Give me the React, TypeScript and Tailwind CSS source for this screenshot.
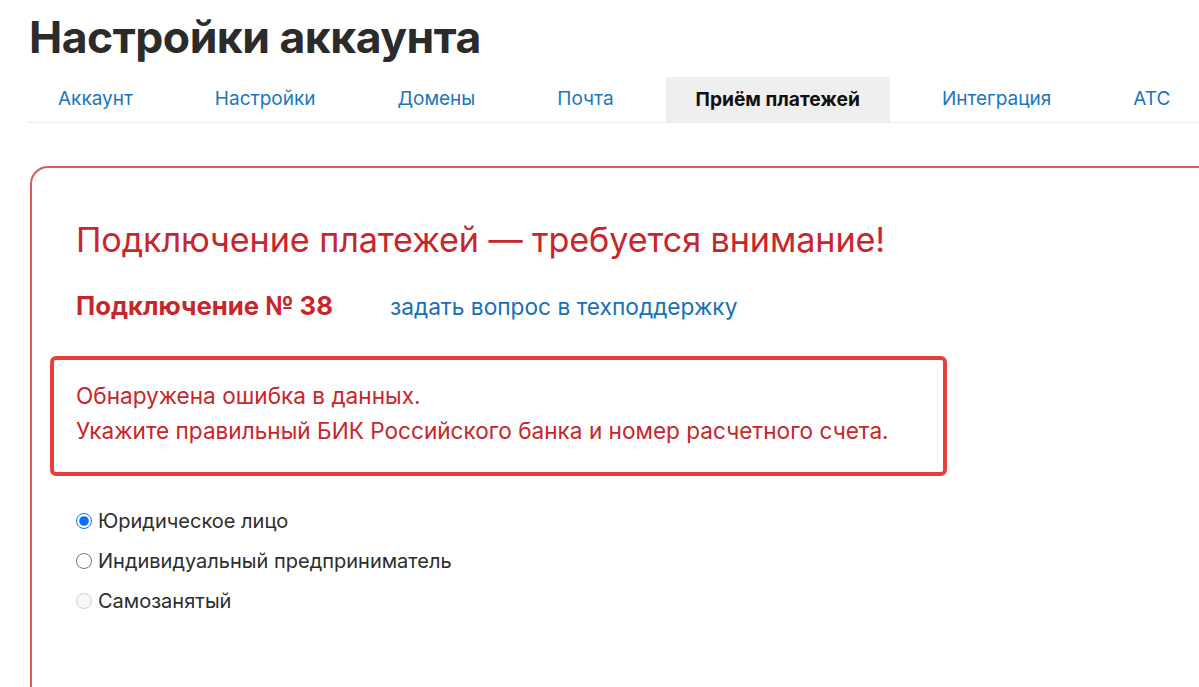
const tabs = ['Аккаунт', 'Настройки', 'Домены', 'Почта', 'Приём платежей', 'Интеграция', 'АТС'];

export default function App() {
  return (
    <div
      className="w-[1199px] h-[687px] overflow-hidden bg-white pl-[28px]"
      style={{ fontFamily: 'Inter, "Noto Sans", sans-serif' }}
    >
      <h1 className="ml-[1px] pt-[12px] text-[44.5px] font-bold leading-[50px] tracking-[-0.5px] text-[#2b2b2b]">
        Настройки аккаунта
      </h1>

      {/* tabs */}
      <nav className="mt-[15px] flex w-[1250px] gap-[22px] border-b border-[#ececec]">
        {tabs.map((t) => {
          const active = t === 'Приём платежей';
          return (
            <a
              key={t}
              className={
                active
                  ? 'flex h-[45px] shrink-0 items-center whitespace-nowrap bg-[#efefef] px-[30px] text-[19.2px] font-bold text-[#111]'
                  : 'flex h-[45px] shrink-0 items-center whitespace-nowrap px-[30px] text-[19px] text-[#1a76bd]'
              }
            >
              {t}
            </a>
          );
        })}
      </nav>

      {/* payment card */}
      <div className="ml-[2px] mt-[43px] h-[600px] w-[1220px] rounded-[18px] border-2 border-[#e15a5a] pl-[44px] pt-[52px]">
        <h2 className="text-[34.2px] leading-[40px] tracking-[-0.1px] text-[#c8262a]">
          Подключение платежей — требуется внимание!
        </h2>

        <div className="mt-[27px] flex items-baseline gap-[57px]">
          <span className="text-[25.7px] font-bold text-[#c8262a]">Подключение № 38</span>
          <a className="text-[22.7px] text-[#1670b6]">задать вопрос в техподдержку</a>
        </div>

        <div className="-ml-[26px] mt-[30px] w-[897px] rounded-[6px] border-4 border-[#e5403a] pb-[24px] pl-[22px] pt-[18px] text-[22.6px] leading-[35px] text-[#c8262a]">
          <p>Обнаружена ошибка в данных.</p>
          <p>Укажите правильный БИК Российского банка и номер расчетного счета.</p>
        </div>

        <div className="mt-[33px] flex flex-col gap-[16px] text-[20px] leading-[24px] text-[#2d2d2d]">
          <label className="flex items-center gap-[6px]">
            <input type="radio" name="kind" defaultChecked className="m-0 h-[16px] w-[16px] accent-[#0b6ef5]" />
            Юридическое лицо
          </label>
          <label className="flex items-center gap-[6px]">
            <input type="radio" name="kind" className="m-0 h-[16px] w-[16px]" />
            Индивидуальный предприниматель
          </label>
          <label className="flex items-center gap-[6px]">
            <input type="radio" name="kind" disabled className="m-0 h-[16px] w-[16px]" />
            Самозанятый
          </label>
        </div>
      </div>
    </div>
  );
}
